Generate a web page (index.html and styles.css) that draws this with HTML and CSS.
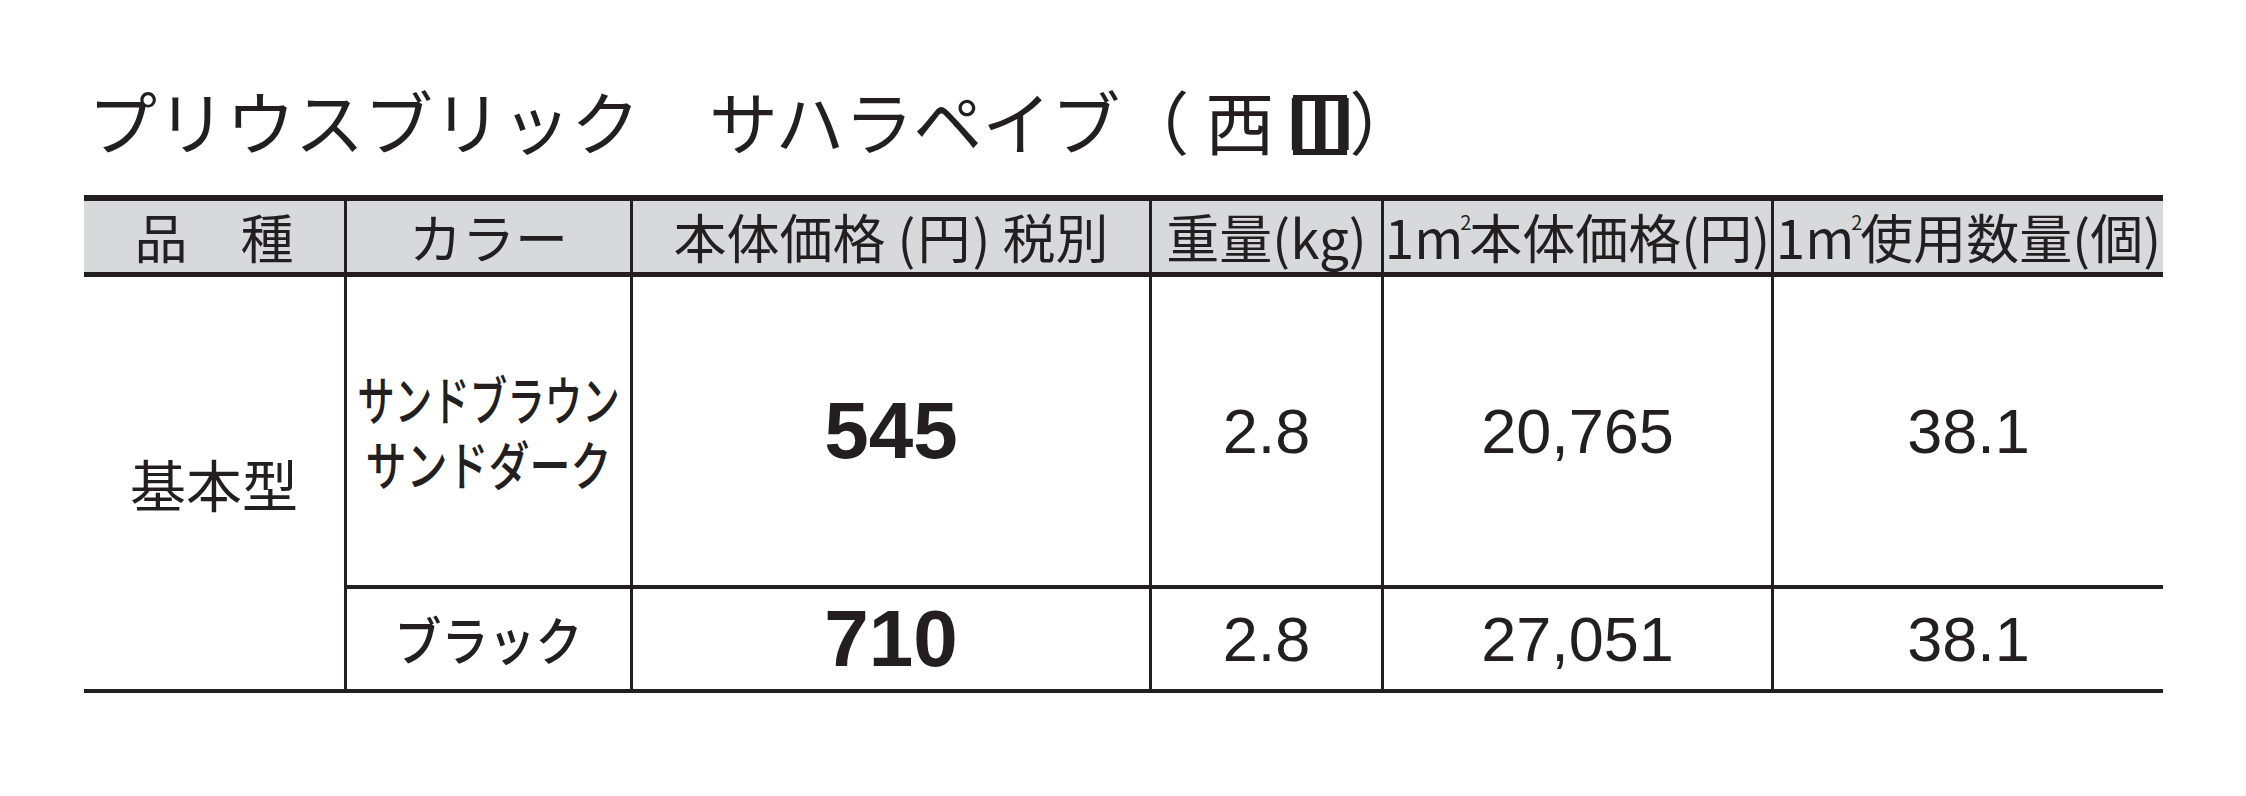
FILE: index.html
```html
<!DOCTYPE html>
<html lang="ja">
<head>
<meta charset="utf-8">
<title>プリウスブリック サハラペイブ（西Ⅲ）</title>
<link rel="stylesheet" href="styles.css">
</head>
<body>
<h1 class="title">プリウスブリック　サハラペイブ<span class="op">（</span>西<span class="roman"><span class="rn">Ⅲ</span></span>）</h1>
<div class="table">
  <div class="th c1">品　種</div>
  <div class="th c2">カラー</div>
  <div class="th c3">本体価格<span class="pl">(</span>円<span class="pr">)</span>税別</div>
  <div class="th c4">重量(kg)</div>
  <div class="th c5">1<span class="m">m<sup>2</sup></span>本体価格(円)</div>
  <div class="th c6">1<span class="m">m<sup>2</sup></span>使用数量(個)</div>

  <div class="td type">基本型</div>

  <div class="td color r1 c2"><span class="ln l1">サンドブラウン</span><span class="ln l2">サンドダーク</span></div>
  <div class="td price r1 c3">545</div>
  <div class="td num r1 c4">2.8</div>
  <div class="td num r1 c5">20,765</div>
  <div class="td num r1 c6">38.1</div>

  <div class="td color r2 c2"><span class="ln l3">ブラック</span></div>
  <div class="td price r2 c3">710</div>
  <div class="td num r2 c4">2.8</div>
  <div class="td num r2 c5">27,051</div>
  <div class="td num r2 c6">38.1</div>
</div>
</body>
</html>
```
FILE: styles.css
```css
html, body {
  margin: 0;
  padding: 0;
  background: #ffffff;
}
body {
  width: 2246px;
  height: 796px;
  overflow: hidden;
  color: #231f20;
  font-family: "Noto Sans CJK JP", "Noto Sans", sans-serif;
}
.title {
  margin: 0;
  padding: 86px 0 0 88px;
  font-size: 69px;
  line-height: 1;
  font-weight: 400;
  white-space: nowrap;
}
.title .op {
  margin-right: 16px;
}
.title .roman {
  display: inline-flex;
  justify-content: center;
  width: 54px;
  height: 48px;
  border-top: 6px solid #231f20;
  border-bottom: 6px solid #231f20;
  margin: 0 2px 0 19px;
}
.title .rn {
  font-size: 70px;
  font-weight: 700;
  line-height: 37px;
  flex: none;
}
.table {
  margin: 40px 0 0 84px;
  width: 2079px;
  display: grid;
  grid-template-columns: 260px 283px 516px 229px 387px 389px;
  grid-template-rows: 71px 5px 308px 4px 100px;
  column-gap: 3px;
  background: #231f20;
  border-top: 6px solid #231f20;
  border-bottom: 4px solid #231f20;
}
.th, .td {
  display: flex;
  align-items: center;
  justify-content: center;
  white-space: nowrap;
}
.th {
  grid-row: 1;
  background: #d8d9da;
  font-size: 53px;
  line-height: 1;
  font-weight: 400;
}
.th .pl {
  margin: 0 2px 0 12px;
}
.th .pr {
  margin: 0 12px 0 2px;
}
.td {
  background: #ffffff;
}
.c1 { grid-column: 1; }
.c2 { grid-column: 2; }
.c3 { grid-column: 3; }
.c4 { grid-column: 4; }
.c5 { grid-column: 5; }
.c6 { grid-column: 6; }
.r1 { grid-row: 3; }
.r2 { grid-row: 5; }
.type {
  grid-column: 1;
  grid-row: 3 / 6;
  font-size: 56px;
  line-height: 1;
}
.m {
  position: relative;
  padding-right: 6px;
}
.m sup {
  position: absolute;
  right: -2px;
  top: 2px;
  font-size: 20px;
  line-height: 1;
  vertical-align: baseline;
}
.color {
  flex-direction: column;
  font-weight: 500;
}
.ln {
  display: block;
  white-space: nowrap;
}
.l1 {
  font-size: 37.5px;
  line-height: 46px;
  margin-bottom: 17px;
  transform: scaleY(1.42);
}
.l2 {
  font-size: 41px;
  line-height: 50px;
  transform: scaleY(1.3);
}
.l3 {
  font-size: 47px;
  line-height: 56px;
  transform: scaleY(1.12);
}
.price {
  font-family: "Liberation Sans", Arial, sans-serif;
  font-weight: 700;
  font-size: 80px;
  line-height: 1;
}
.num {
  font-family: "Liberation Sans", Arial, sans-serif;
  font-weight: 400;
  font-size: 63px;
  line-height: 1;
}
```
